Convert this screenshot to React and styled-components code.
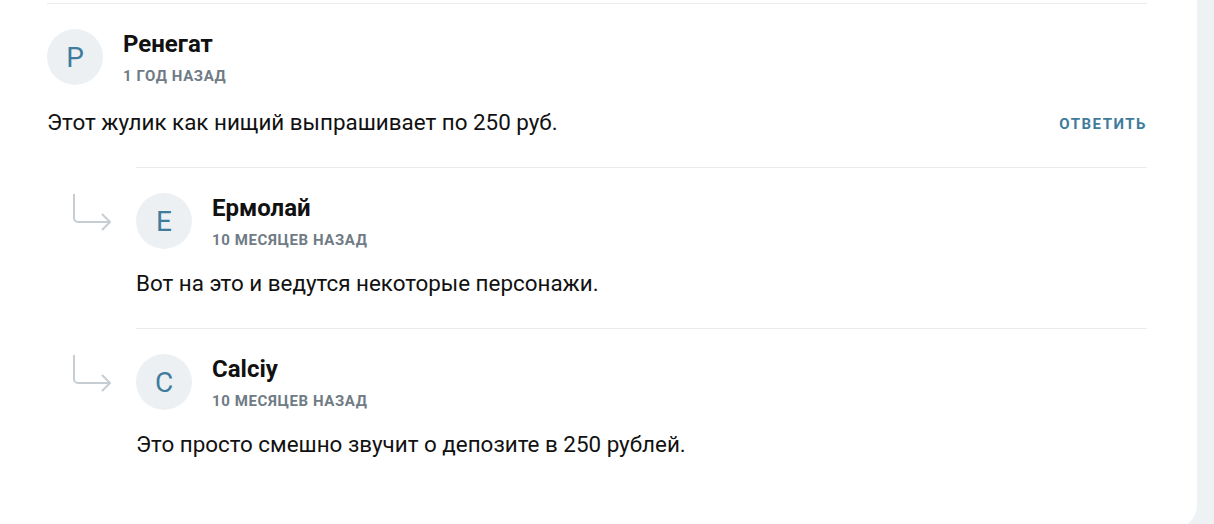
import styled, { createGlobalStyle } from 'styled-components'

const GlobalStyle = createGlobalStyle`
    html, body {
        margin: 0;
        padding: 0;
        background-color: #eef2f4;
        font-family: Roboto, "Noto Sans", Arial, sans-serif;
    }
`

// style part
const PageStyle = styled.div`
    display: flex;
    width: 1214px;
    height: 524px;
    overflow: hidden;
`

const CardStyle = styled.div`
    flex-shrink: 0;
    width: 1197px;
    height: 529px;
    background-color: #ffffff;
    border-radius: 0 0 24px 0;
    box-sizing: border-box;
    padding: 3px 50px 0 47px;
`

const CommentStyle = styled.div`
    border-top: 1px solid #e9ecef;
    padding: 25px 0 31px;
    margin-left: ${(props) => (props.$reply ? '89px' : '0')};
    position: relative;
`

const HeaderStyle = styled.div`
    display: flex;
    align-items: center;
    gap: 20px;
`

const AvatarStyle = styled.div`
    display: flex;
    justify-content: center;
    align-items: center;
    flex-shrink: 0;
    width: 56px;
    height: 56px;
    border-radius: 50%;
    background-color: #edf0f3;
    color: #3f7c9c;
    font-size: 28px;
    font-weight: 400;
`

const MetaStyle = styled.div`
    display: flex;
    flex-direction: column;
    gap: 11px;
    margin-top: 1px;
`

const NameStyle = styled.div`
    font-size: 24px;
    font-weight: 700;
    color: #111111;
    line-height: 26px;
`

const TimeStyle = styled.div`
    font-size: 15px;
    font-weight: 700;
    color: #6f7b85;
    letter-spacing: 0.6px;
    text-transform: uppercase;
    line-height: 16px;
`

const BodyStyle = styled.div`
    display: flex;
    justify-content: space-between;
    align-items: center;
    margin-top: ${(props) => (props.$reply ? '20px' : '23px')};
`

const TextStyle = styled.p`
    margin: 0;
    font-size: 22.4px;
    line-height: 28px;
    color: #111111;
`

const ReplyButtonStyle = styled.button`
    border: none;
    background: none;
    padding: 0;
    margin-top: 4px;
    font-family: inherit;
    font-size: 15px;
    font-weight: 700;
    letter-spacing: 1.5px;
    text-transform: uppercase;
    color: #3f7c9c;
    cursor: pointer;
`

const ArrowStyle = styled.svg`
    position: absolute;
    left: -66px;
    top: 26px;
`

// function part

function ReplyArrow() {
    return (
        <ArrowStyle width="42" height="40" viewBox="0 0 42 40" fill="none">
            <path
                d="M4 0v24a4 4 0 0 0 4 4h32"
                stroke="#c6ced4"
                strokeWidth="2"
            />
            <path
                d="M32 20l8 8-8 8"
                stroke="#c6ced4"
                strokeWidth="2"
                strokeLinejoin="round"
            />
        </ArrowStyle>
    )
}

function Comment({ letter, name, time, text, reply, canAnswer }) {
    return (
        <CommentStyle $reply={reply}>
            {reply && <ReplyArrow />}
            <HeaderStyle>
                <AvatarStyle>{letter}</AvatarStyle>
                <MetaStyle>
                    <NameStyle>{name}</NameStyle>
                    <TimeStyle>{time}</TimeStyle>
                </MetaStyle>
            </HeaderStyle>
            <BodyStyle $reply={reply}>
                <TextStyle>{text}</TextStyle>
                {canAnswer && <ReplyButtonStyle>Ответить</ReplyButtonStyle>}
            </BodyStyle>
        </CommentStyle>
    )
}

function App() {
    return (
        <PageStyle>
            <GlobalStyle />
            <CardStyle>
                <Comment
                    letter="Р"
                    name="Ренегат"
                    time="1 год назад"
                    text="Этот жулик как нищий выпрашивает по 250 руб."
                    canAnswer
                />
                <Comment
                    reply
                    letter="Е"
                    name="Ермолай"
                    time="10 месяцев назад"
                    text="Вот на это и ведутся некоторые персонажи."
                />
                <Comment
                    reply
                    letter="C"
                    name="Calciy"
                    time="10 месяцев назад"
                    text="Это просто смешно звучит о депозите в 250 рублей."
                />
            </CardStyle>
        </PageStyle>
    )
}

export default App
